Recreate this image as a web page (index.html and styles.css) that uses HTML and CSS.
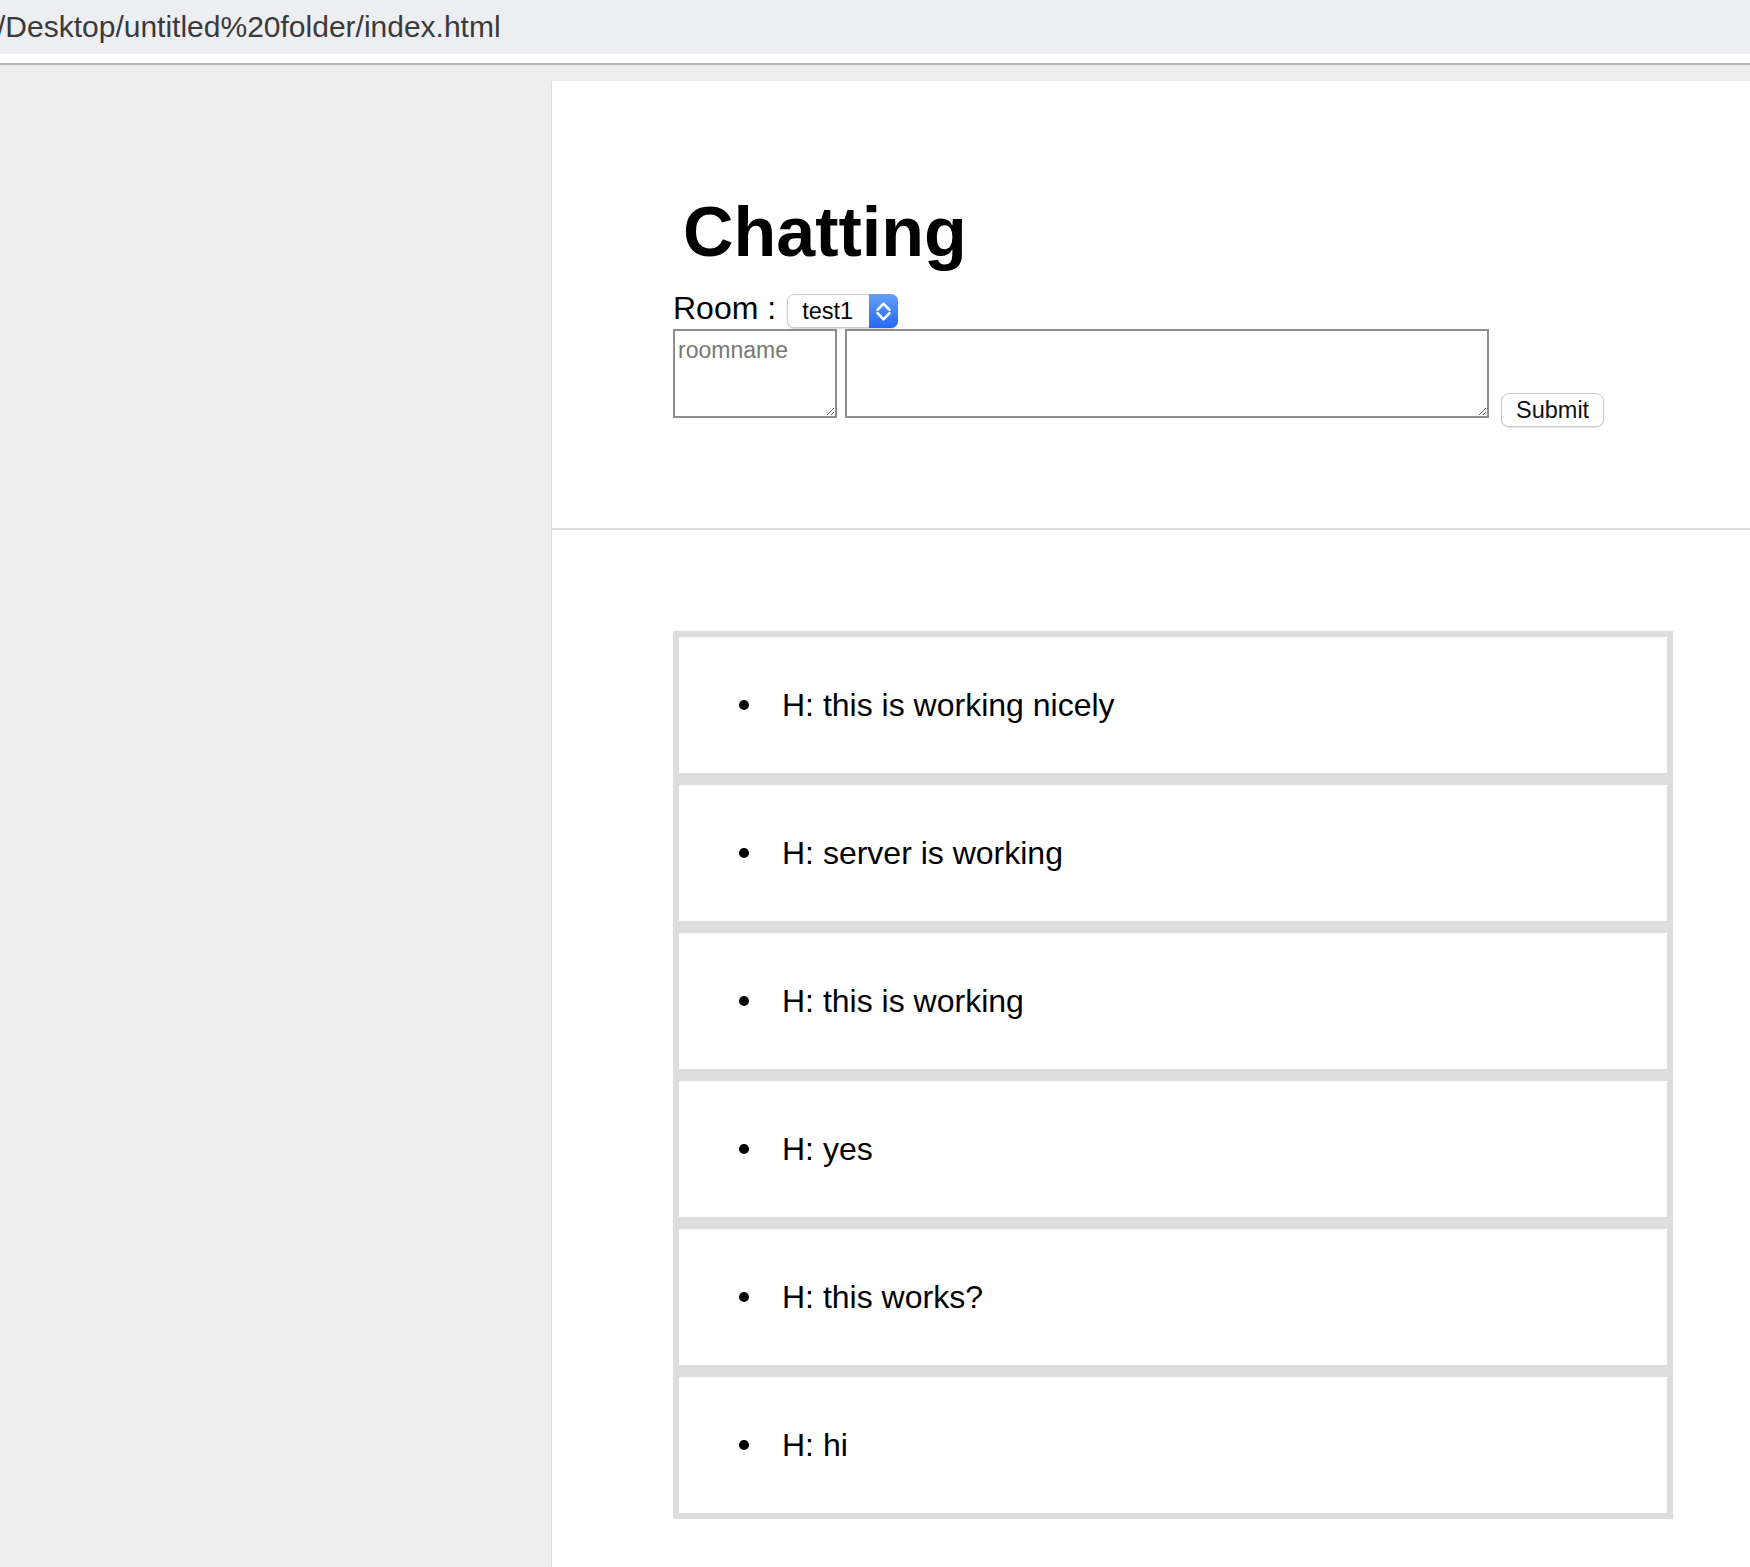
FILE: index.html
```html
<!DOCTYPE html>
<html lang="en">
<head>
<meta charset="utf-8">
<title>Chatting</title>
<link rel="stylesheet" href="styles.css">
</head>
<body>
<div class="browser-bar"><span class="url">/Desktop/untitled%20folder/index.html</span></div>
<div class="browser-gap"></div>
<div class="page">
  <aside class="sidebar"></aside>
  <main class="panel">
    <section class="composer">
      <h1 class="title">Chatting</h1>
      <div class="room-row">
        <label class="room-label" for="room">Room :</label>
        <span class="select-wrap">
          <select id="room" class="room-select"><option>test1</option></select>
          <span class="stepper">
            <svg class="stepper-icon" viewBox="0 0 29 34" width="29" height="34">
              <path d="M8.5 15.8 L14.5 9.6 L20.5 15.8" />
              <path d="M8.5 19.2 L14.5 25.4 L20.5 19.2" />
            </svg>
          </span>
        </span>
      </div>
      <form class="input-row">
        <textarea class="field roomname" placeholder="roomname"></textarea>
        <textarea class="field message-input"></textarea>
        <button type="button" class="submit">Submit</button>
      </form>
    </section>
    <ul class="messages">
      <li class="message">H: this is working nicely</li>
      <li class="message">H: server is working</li>
      <li class="message">H: this is working</li>
      <li class="message">H: yes</li>
      <li class="message">H: this works?</li>
      <li class="message">H: hi</li>
    </ul>
  </main>
</div>
</body>
</html>
```

FILE: styles.css
```css
* {
  box-sizing: border-box;
}

html,
body {
  margin: 0;
}

body {
  background: #eeeeee;
  font-family: "Liberation Sans", Arial, sans-serif;
  color: #000;
  min-height: 1567px;
}

.browser-bar {
  height: 54px;
  background: #edeef1;
  display: flex;
  align-items: center;
  overflow: hidden;
}

.url {
  font-size: 30px;
  color: #3a3a3a;
  margin-left: -3px;
  white-space: nowrap;
}

.browser-gap {
  height: 11px;
  background: #fff;
  border-bottom: 2px solid #b3b3b3;
}

.page {
  display: grid;
  grid-template-columns: 551px 1fr;
  padding-top: 16px;
}

.panel {
  background: #fff;
  border-left: 1px solid #dadada;
  min-height: 1486px;
}

.composer {
  padding: 111px 0 101px 121px;
  border-bottom: 2px solid #dddddd;
}

.title {
  margin: 0 0 18px 10px;
  font-size: 70px;
  line-height: 80px;
  font-weight: bold;
}

.room-row {
  display: flex;
  align-items: baseline;
  gap: 11px;
}

.room-label {
  font-size: 32px;
  line-height: 36px;
}

.select-wrap {
  position: relative;
  display: inline-flex;
}

.room-select {
  -webkit-appearance: none;
  appearance: none;
  width: 111px;
  height: 34px;
  margin: 0;
  padding: 0 0 0 14px;
  border: 1px solid #cdcdcd;
  border-radius: 7px;
  background: #fff;
  box-shadow: 0 1px 1.5px rgba(0, 0, 0, 0.15);
  font-family: "Liberation Sans", Arial, sans-serif;
  font-size: 23.5px;
  color: #000;
}

.stepper {
  position: absolute;
  top: 0;
  right: 0;
  width: 29px;
  height: 34px;
  border-radius: 0 7px 7px 0;
  background: linear-gradient(#62a0fb, #2767f5);
  pointer-events: none;
  display: flex;
}

.stepper-icon path {
  fill: none;
  stroke: #fff;
  stroke-width: 2.6;
  stroke-linecap: round;
  stroke-linejoin: round;
}

.input-row {
  display: flex;
  align-items: flex-start;
  margin: 1px 0 0;
}

.field {
  height: 89px;
  margin: 0;
  padding: 6px 3px;
  border: 2px solid #8e8e8e;
  font-family: "Liberation Sans", Arial, sans-serif;
  font-size: 23px;
  resize: both;
  background: #fff;
}

.field::placeholder {
  color: #777;
}

.roomname {
  width: 164px;
}

.message-input {
  width: 644px;
  margin-left: 8px;
}

.submit {
  margin: 64px 0 0 12px;
  height: 34px;
  padding: 1px 14px 0;
  border: 1px solid #cbcbcb;
  border-radius: 8px;
  background: #fff;
  box-shadow: 0 1px 1px rgba(0, 0, 0, 0.12);
  font-family: "Liberation Sans", Arial, sans-serif;
  font-size: 23.5px;
  color: #111;
}

.messages {
  list-style: none;
  margin: 101px 0 0 121px;
  padding: 0;
  width: 1000px;
}

.message {
  height: 148px;
  border: 6px solid #dddddd;
  padding: 0 0 0 60px;
  display: flex;
  align-items: center;
  font-size: 32px;
  line-height: 37px;
}

.message::before {
  content: "";
  flex: none;
  width: 10px;
  height: 10px;
  margin-right: 33px;
  border-radius: 50%;
  background: #000;
}
```
